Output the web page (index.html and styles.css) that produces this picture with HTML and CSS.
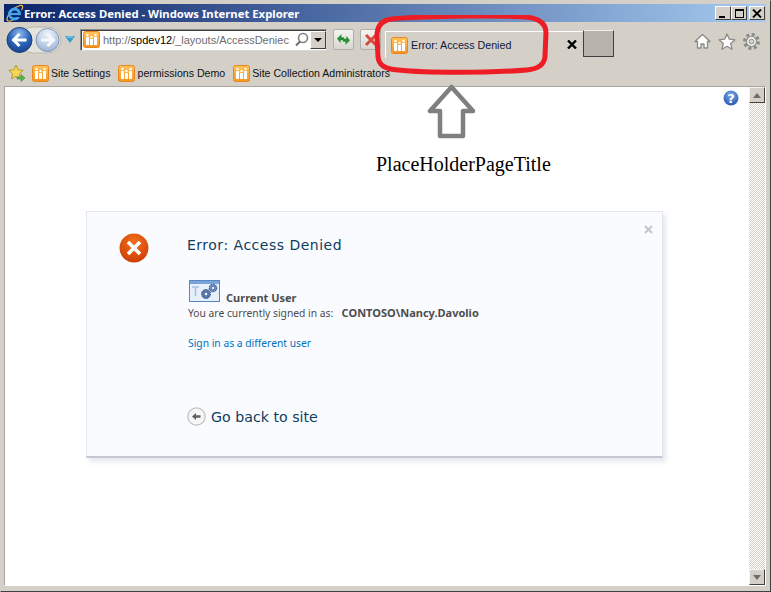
FILE: index.html
```html
<!DOCTYPE html>
<html lang="en">
<head>
<meta charset="utf-8">
<title>Error: Access Denied - Windows Internet Explorer</title>
<link rel="stylesheet" href="styles.css">
</head>
<body>
<svg class="defs" width="0" height="0">
  <defs>
    <linearGradient id="og" x1="0" y1="0" x2="0" y2="1"><stop offset="0" stop-color="#ffc35a"/><stop offset="1" stop-color="#f79420"/></linearGradient>
    <radialGradient id="bk" cx=".5" cy=".25" r=".85"><stop offset="0" stop-color="#8fb8ee"/><stop offset=".5" stop-color="#2a62b8"/><stop offset="1" stop-color="#123a80"/></radialGradient>
    <radialGradient id="fw" cx=".5" cy=".25" r=".85"><stop offset="0" stop-color="#eef3fa"/><stop offset=".6" stop-color="#b9cbe4"/><stop offset="1" stop-color="#8ea5c6"/></radialGradient>
    <radialGradient id="rd" cx=".5" cy=".3" r=".75"><stop offset="0" stop-color="#f0701c"/><stop offset="1" stop-color="#cc3c04"/></radialGradient>
    <radialGradient id="hp" cx=".5" cy=".3" r=".75"><stop offset="0" stop-color="#7ca6e6"/><stop offset="1" stop-color="#2458ae"/></radialGradient>
    <symbol id="site" viewBox="0 0 17 17">
      <rect x=".5" y=".5" width="16" height="16" rx="2" fill="url(#og)" stroke="#e8861c"/>
      <rect x="3" y="6" width="3" height="8" fill="#fff"/><rect x="7" y="8" width="3" height="6" fill="#fff"/><rect x="11" y="6" width="3" height="8" fill="#fff"/>
      <circle cx="4.5" cy="4" r="1.2" fill="#fff"/><circle cx="8.5" cy="6" r="1.2" fill="#fff"/><circle cx="12.5" cy="4" r="1.2" fill="#fff"/>
    </symbol>
  </defs>
</svg>
<div class="window">
  <header class="titlebar">
    <svg class="ie-logo" width="19" height="18" viewBox="0 0 19 18"><path d="M2 14.500C3.500 8 10 3 15 1.500c3-.8 3.500 1.500 1.500 4.500M2 14.500c-.5 3 3 3.200 6 1.500" fill="none" stroke="#e8b84a" stroke-width="1.200"/><circle cx="9.500" cy="10" r="5" fill="none" stroke="#45a5ea" stroke-width="2.800"/><rect x="6" y="9" width="8" height="2" fill="#45a5ea"/><rect x="11.500" y="11.200" width="5" height="1.800" fill="#0a246a"/></svg>
    <span class="title-text">Error: Access Denied - Windows Internet Explorer</span>
    <div class="win-buttons">
      <span class="win-btn"><i class="g-min"></i></span>
      <span class="win-btn"><i class="g-max"></i></span>
      <span class="win-btn win-close"><svg width="10" height="9" viewBox="0 0 10 9"><path d="M1 .5l8 8M9 .5l-8 8" stroke="#000" stroke-width="1.800" fill="none"/></svg></span>
    </div>
  </header>

  <div class="navbar">
    <div class="nav-arrows">
      <svg width="58" height="32" viewBox="0 0 58 32">
        <rect x="16" y="3" width="41" height="26" rx="13" fill="#e4e2dc" stroke="#b8b6b0"/>
        <circle cx="43.500" cy="16" r="11.500" fill="url(#fw)" stroke="#8298b8"/>
        <path d="M37 16h13M43.500 10l-6 6 6 6" transform="rotate(180 43.500 16)" fill="none" stroke="#f4f7fb" stroke-width="3"/>
        <circle cx="15.500" cy="16" r="12.500" fill="url(#bk)" stroke="#1c3f7c"/>
        <path d="M9.500 16h13M15.500 10l-6 6 6 6" fill="none" stroke="#fff" stroke-width="3"/>
      </svg>
      <svg class="nav-drop" width="10" height="7" viewBox="0 0 10 7"><path d="M0 0h10L5 7z" fill="#2f9ec8"/><path d="M2 1h6" stroke="#a8dcf0"/></svg>
    </div>
    <div class="address">
      <svg class="ico17" width="17" height="17"><use href="#site"/></svg>
      <span class="url"><span class="url-dim">http://</span>spdev12<span class="url-dim">/_layouts/AccessDeniec</span></span>
      <svg class="search" width="15" height="15" viewBox="0 0 15 15"><circle cx="9" cy="6" r="4.500" fill="#fff" stroke="#808080" stroke-width="1.600"/><path d="M6 9.500L2 13.500" stroke="#707070" stroke-width="2.200"/></svg>
      <span class="addr-drop"><i></i></span>
    </div>
    <span class="tool-btn"><svg width="15" height="15" viewBox="0 0 15 15"><path d="M1 7l4-5v3h3v3H5v3z" fill="#2c8f36" transform="rotate(8 5 7)"/><path d="M14 8l-4 5v-3H7V7h3V4z" fill="#2c8f36" transform="rotate(8 10 8)"/></svg></span>
    <span class="tool-btn"><svg width="14" height="14" viewBox="0 0 14 14"><path d="M2 2l10 10M12 2L2 12" stroke="#d84a42" stroke-width="3"/></svg></span>
  </div>

  <div class="favbar">
    <svg class="fav-star" width="18" height="18" viewBox="0 0 18 18"><path d="M8 1l2.200 4.800 5 .6-3.700 3.400 1 5L8 12.300 3.500 14.800l1-5L.8 6.400l5-.6z" fill="#f6d65a" stroke="#b89a28"/><path d="M9 13h4v-2.500l4 3.500-4 3.500V15H9z" fill="#58b848" stroke="#3a8a30" stroke-width=".6"/></svg>
    <a class="fav"><svg width="17" height="17"><use href="#site"/></svg>Site Settings</a>
    <a class="fav"><svg width="17" height="17"><use href="#site"/></svg>permissions Demo</a>
    <a class="fav"><svg width="17" height="17"><use href="#site"/></svg>Site Collection Administrators</a>
  </div>

  <main class="viewport">
    <div class="page">
      <svg class="help" width="16" height="16" viewBox="0 0 16 16"><circle cx="8" cy="8" r="7.500" fill="url(#hp)"/><text x="8" y="12.500" text-anchor="middle" class="help-q">?</text></svg>
      <section class="card">
        <svg class="card-close" width="9" height="9" viewBox="0 0 9 9"><path d="M1 1l7 7M8 1L1 8" stroke="#c4c6cc" stroke-width="2"/></svg>
        <div class="card-icon">
          <svg width="30" height="30" viewBox="0 0 30 30"><circle cx="15" cy="15" r="14.500" fill="url(#rd)"/><path d="M9 9l12 12M21 9L9 21" stroke="#fff" stroke-width="3.600"/></svg>
        </div>
        <div class="card-body">
          <h1 class="card-title">Error: Access Denied</h1>
          <div class="user-head">
            <svg width="31" height="22" viewBox="0 0 31 22"><rect x=".5" y=".5" width="30" height="21" fill="#e6effa" stroke="#5a86c0"/><rect x="1" y="1" width="29" height="3" fill="#7ba4dc"/><path d="M3 7h7M6.500 7v9" stroke="#a8c0e0" stroke-width="1.500"/><circle cx="17" cy="14" r="4.500" fill="#5878a8" stroke="#2c4a80" stroke-dasharray="1.500 1"/><circle cx="24" cy="8" r="3.800" fill="#6888b8" stroke="#2c4a80" stroke-dasharray="1.500 1"/><circle cx="17" cy="14" r="1.200" fill="#fff"/><circle cx="24" cy="8" r="1" fill="#fff"/></svg>
            <strong class="user-label">Current User</strong>
          </div>
          <p class="signed">You are currently signed in as:&nbsp; <strong>CONTOSO\Nancy.Davolio</strong></p>
          <a class="switch-user">Sign in as a different user</a>
          <a class="back-link">
            <svg width="19" height="19" viewBox="0 0 19 19"><circle cx="9.500" cy="9.500" r="8.700" fill="#f6f6f6" stroke="#c0c0c0" stroke-width="1.200"/><path d="M5 9.500l4-3.500v2.200h4.500v2.600H9V13z" fill="#606060"/></svg>
            Go back to site
          </a>
        </div>
      </section>
    </div>
    <div class="scrollbar">
      <span class="sb-btn"><i class="tri-up"></i></span>
      <span class="sb-track"></span>
      <span class="sb-btn"><i class="tri-down"></i></span>
    </div>
  </main>

  <div class="tools">
    <svg width="17" height="17" viewBox="0 0 17 17"><path d="M8.500 1.500L1 8.500h2.500V15h3.500v-4h3v4h3.500V8.500H16z" fill="#fff" stroke="#8a8a86" stroke-width="1.300" stroke-linejoin="round"/></svg>
    <svg width="18" height="17" viewBox="0 0 18 17"><path d="M9 1l2.300 5.200 5.700.6-4.300 3.800 1.300 5.600L9 13.300 4 16.200l1.300-5.600L1 6.800l5.700-.6z" fill="#fff" stroke="#8a8a86" stroke-width="1.300" stroke-linejoin="round"/></svg>
    <svg width="17" height="17" viewBox="0 0 17 17"><circle cx="8.500" cy="8.500" r="7" fill="none" stroke="#8a8a86" stroke-width="3" stroke-dasharray="3 2.500"/><circle cx="8.500" cy="8.500" r="5" fill="#fff" stroke="#8a8a86" stroke-width="1.200"/><circle cx="8.500" cy="8.500" r="2.500" fill="#d4d0c8" stroke="#8a8a86"/></svg>
  </div>

  <div class="tab-note">
    <div class="tab">
      <svg width="17" height="17"><use href="#site"/></svg>
      <span class="tab-title">Error: Access Denied</span>
      <svg class="tab-x" width="10" height="9" viewBox="0 0 10 9"><path d="M1 .5l8 8M9 .5l-8 8" stroke="#000" stroke-width="2.400"/></svg>
    </div>
    <span class="new-tab"></span>
  </div>
  <svg class="ring" width="177" height="60" viewBox="0 0 176 60" preserveAspectRatio="none"><path d="M18 4C50 1 130 0 150 2c14 1 21 6 21 16l-1 24c-1 8-7 12-18 13-40 3-100 3-128 0C10 54 5 50 4 42L3 21C3 11 8 5 18 4z" fill="none" stroke="#ee1c25" stroke-width="5"/></svg>
  <svg class="up-arrow" width="50" height="56" viewBox="0 0 50 56"><path d="M24.500 3L3 27h10v25h23V27h10z" fill="#fff" stroke="#7f7f7f" stroke-width="4.500" stroke-linejoin="round"/></svg>
  <div class="note">PlaceHolderPageTitle</div>
</div>
</body>
</html>
```

FILE: styles.css
```css
* { box-sizing: border-box; }
html, body { margin: 0; padding: 0; }
body { width: 771px; height: 592px; overflow: hidden; font-family: "Noto Sans", "Liberation Sans", sans-serif; }
.defs { position: absolute; }
a { text-decoration: none; }

.window {
  position: relative;
  width: 771px;
  height: 592px;
  display: flex;
  flex-direction: column;
  background: #d4d0c8;
  padding: 3px 4px 5px 3px;
  border: 1px solid #d4d0c8;
  border-right-color: #404040;
  border-bottom-color: #404040;
}

.titlebar {
  flex: none;
  height: 18px;
  display: flex;
  align-items: center;
  padding: 0 1px 0 1px;
  gap: 0;
  background: linear-gradient(90deg, #0a246a 0%, #a6caf0 100%);
}
.title-text { color: #fff; font: bold 11.300px "Noto Sans", sans-serif; white-space: nowrap; }
.win-buttons { margin-left: auto; display: flex; }
.win-btn {
  width: 16px; height: 14px; background: #d4d0c8; display: flex; align-items: center; justify-content: center;
  border: 1px solid; border-color: #fff #404040 #404040 #fff; position: relative;
}
.win-close { margin-left: 2px; }
.g-min { width: 6px; height: 2px; background: #000; margin-top: 7px; margin-right: 2px; }
.g-max { width: 9px; height: 9px; border: 1px solid #000; border-top-width: 2px; }

.navbar { flex: none; height: 35px; display: flex; align-items: center; }
.nav-arrows { display: flex; align-items: center; gap: 3px; width: 76px; flex: none; }
.address {
  width: 247px; height: 22px; flex: none; display: flex; align-items: center; background: #fff;
  border: 1px solid; border-color: #8a8a86 #d8d8d8 #d8d8d8 #8a8a86; box-shadow: inset 1px 1px 0 #404040;
  padding-left: 2px;
}
.ico17 { flex: none; }
.url { font: 11px "Liberation Sans", sans-serif; color: #000; margin-left: 3px; flex: 1; min-width: 0; white-space: nowrap; }
.url-dim { color: #6d6d6d; }
.search { margin-left: 1px; flex: none; }
.addr-drop { width: 16px; height: 18px; margin-left: 1px; background: #d4d0c8; border: 1px solid; border-color: #fff #404040 #404040 #fff; display: flex; align-items: center; justify-content: center; flex: none; }
.addr-drop i { border: 4px solid transparent; border-top: 4px solid #000; border-bottom: 0; }
.tool-btn { width: 21px; height: 21px; margin-left: 6px; flex: none; display: flex; align-items: center; justify-content: center; background: linear-gradient(#f4f4f2, #d8d6d0); border: 1px solid #b0aea8; border-radius: 2px; }

.favbar { flex: none; height: 29px; display: flex; align-items: center; padding: 3px 0 0 4px; white-space: nowrap; }
.fav-star { margin-right: 6px; flex: none; }
.fav { display: inline-flex; align-items: center; gap: 2px; font: 10.600px "Liberation Sans", sans-serif; color: #111; margin-right: 8px; }

.viewport {
  flex: 1;
  min-height: 0;
  display: flex;
  border: 1px solid; border-color: #a8a6a0 #fff #fff #a8a6a0;
  background: #fff;
}
.page { position: relative; flex: 1; padding: 124px 85px 0 81px; background: #fff; }
.help { position: absolute; top: 3px; right: 10px; }
.help-q { fill: #fff; font: bold 13px "DejaVu Sans", sans-serif; }

.card {
  position: relative;
  width: 577px;
  height: 247px;
  display: flex;
  background: #fafbff;
  border: 1px solid #e4e6ee;
  border-bottom: 2px solid #c4c8d0;
  box-shadow: 3px 4px 4px rgba(200, 206, 222, .45);
}
.card-close { position: absolute; top: 13px; right: 9px; }
.card-icon { width: 100px; padding: 21px 0 0 32px; flex: none; }
.card-body { display: flex; flex-direction: column; align-items: flex-start; flex: 1; }
.card-title { margin: 25px 0 0; font: normal 14px "DejaVu Sans", sans-serif; letter-spacing: .5px; color: #0f3d5c; }
.user-head { display: flex; align-items: flex-end; margin: 27px 0 0 2px; gap: 6px; }
.user-label { font: bold 11px "Noto Sans", sans-serif; color: #4c4c4c; line-height: 14px; margin-bottom: -3px; }
.signed { margin: 3px 0 0 1px; font: 10.300px "Noto Sans", sans-serif; color: #4c4c4c; line-height: 15px; }
.signed strong { font-size: 11px; color: #4c4c4c; margin-left: 3px; }
.switch-user { margin: 15px 0 0 1px; font: 10.300px "Noto Sans", sans-serif; color: #0072bc; line-height: 15px; }
.back-link { margin-top: 56px; display: flex; align-items: center; gap: 5px; font: 14.200px "DejaVu Sans", sans-serif; color: #0f3d5c; }

.scrollbar { flex: none; width: 16px; display: flex; flex-direction: column; }
.sb-btn { flex: none; height: 16px; background: #d4d0c8; border: 1px solid; border-color: #f4f4f0 #404040 #404040 #f4f4f0; display: flex; align-items: center; justify-content: center; }
.tri-up { border: 4px solid transparent; border-bottom: 5px solid #706c68; border-top: 0; }
.tri-down { border: 4px solid transparent; border-top: 5px solid #706c68; border-bottom: 0; }
.sb-track { flex: 1; background: repeating-conic-gradient(#d4d0c8 0 25%, #fff 0 50%) 0 0 / 2px 2px; }

.tools { position: absolute; top: 32px; right: 10px; display: flex; gap: 7px; align-items: center; }

.tab-note { position: absolute; left: 384px; top: 29px; display: flex; height: 28px; }
.tab { width: 198px; height: 27px; margin-top: 1px; display: flex; align-items: center; gap: 3px; padding-left: 5px; border-top: 1px solid #fff; border-left: 1px solid #fff; background: #d4d0c8; position: relative; }
.tab-title { font: 10.700px "Liberation Sans", sans-serif; color: #10183a; }
.tab-x { position: absolute; right: 6px; top: 8px; }
.new-tab { width: 31px; height: 27px; background: #b8b4ac; border: 1px solid; border-color: #f0eee8 #404040 #404040 #404040; }
.ring { position: absolute; left: 373px; top: 14px; }
.up-arrow { position: absolute; left: 426px; top: 83px; }
.note { position: absolute; left: 375px; top: 152px; font: 20px "Liberation Serif", serif; color: #000; white-space: nowrap; }
```
